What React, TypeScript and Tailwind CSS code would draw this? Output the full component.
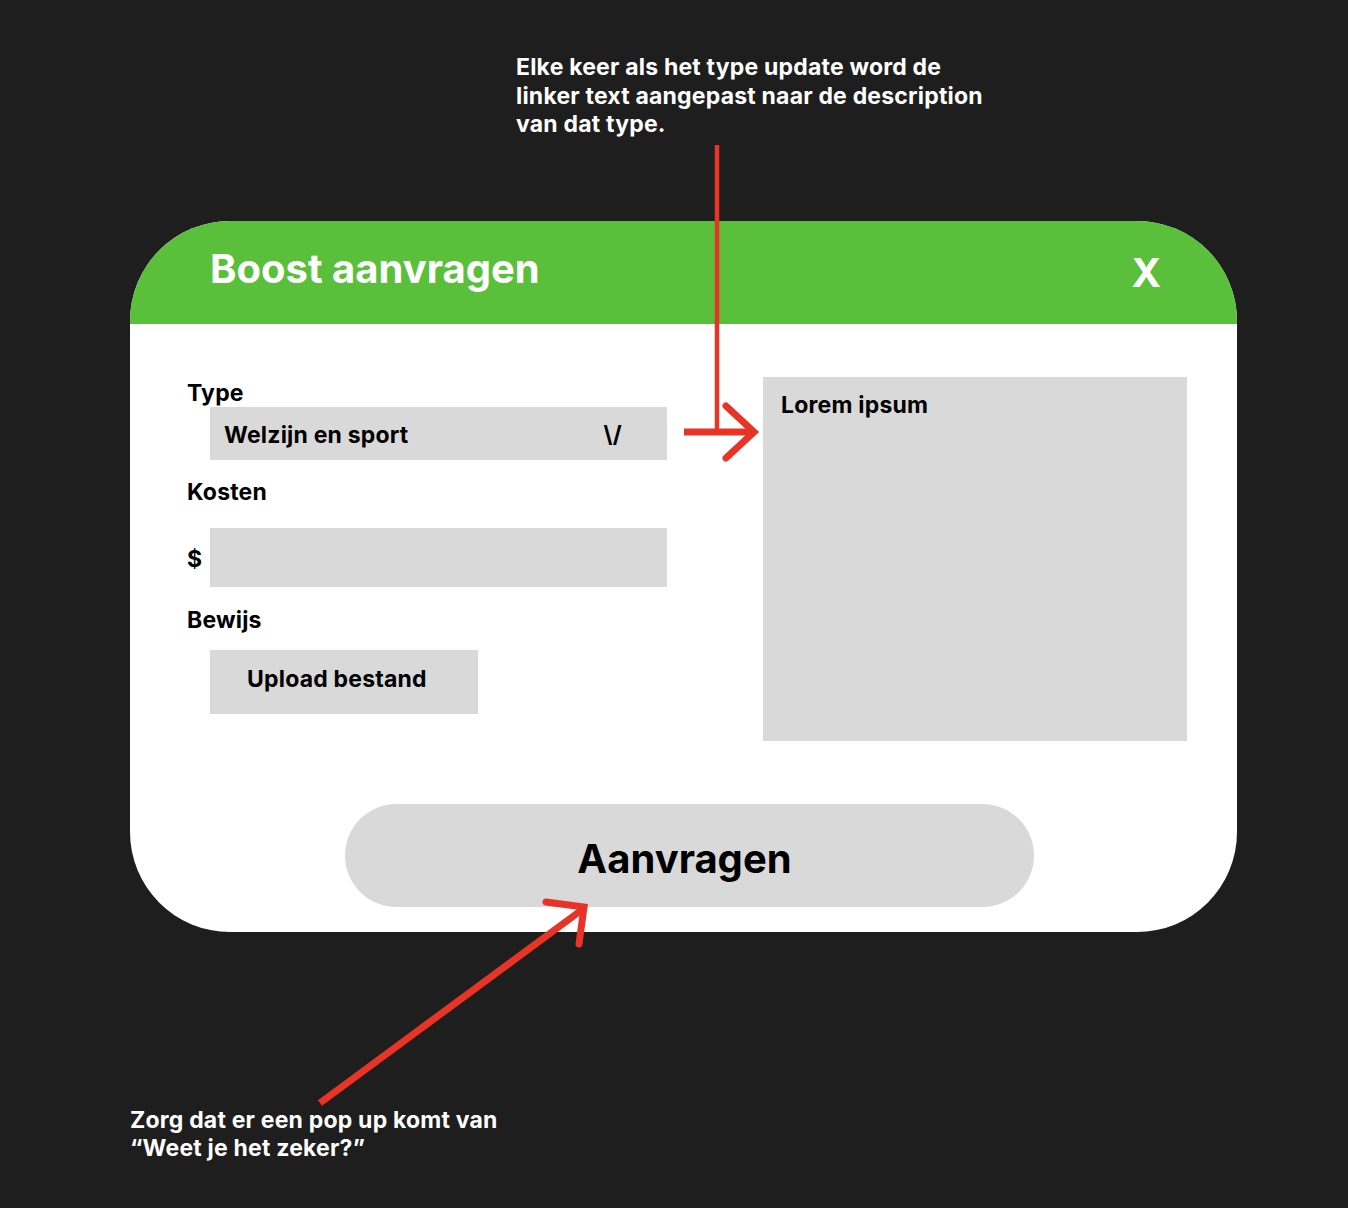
export default function App() {
  return (
    <div
      className="relative w-[1348px] h-[1208px] bg-[#1e1e1e] overflow-hidden"
      style={{ fontFamily: "Inter, 'Noto Sans', sans-serif" }}
    >
      {/* note: type description */}
      <div className="pt-[53px] pl-[516px] text-[23px] leading-[28.5px] font-bold tracking-[0.2px] text-white">
        Elke keer als het type update word de
        <br />
        linker text aangepast naar de description
        <br />
        van dat type.
      </div>

      {/* modal */}
      <div className="mt-[82px] ml-[130px] w-[1107px] rounded-[100px] bg-white overflow-hidden">
        <div className="h-[103px] bg-[#5abf3b] flex items-start justify-between pl-[80px] pr-[76px] text-white font-bold text-[40px] leading-[48px]">
          <div className="pt-[24px]">Boost aanvragen</div>
          <div className="pt-[28px]">X</div>
        </div>

        <div className="flex items-start pt-[53px] pl-[57px] gap-[96px]">
          <div className="w-[480px] pt-[2px] text-[23px] leading-[28px] font-bold tracking-[0.2px] text-black">
            <div>Type</div>
            <div className="ml-[23px] h-[53px] bg-[#d9d9d9] flex items-center justify-between pt-[3px] pl-[14px] pr-[45px]">
              <span>Welzijn en sport</span>
              <span>\/</span>
            </div>
            <div className="mt-[18px]">Kosten</div>
            <div className="mt-[22px] flex items-center">
              <span className="w-[23px] pt-[3px]">$</span>
              <div className="flex-1 h-[59px] bg-[#d9d9d9]" />
            </div>
            <div className="mt-[19px]">Bewijs</div>
            <div className="mt-[16px] ml-[23px] w-[268px] h-[64px] bg-[#d9d9d9] flex items-center pl-[37px] pb-[5px]">
              Upload bestand
            </div>
          </div>
          <div className="w-[424px] h-[364px] bg-[#d9d9d9] pt-[14px] pl-[18px] text-[23px] leading-[28px] font-bold tracking-[0.2px] text-black">
            Lorem ipsum
          </div>
        </div>

        <div className="mt-[63px] mb-[25px] ml-[215px] w-[689px] h-[103px] rounded-full bg-[#d9d9d9] flex items-center justify-center pt-[8px] pr-[10px] text-[40px] leading-[48px] font-bold text-black">
          Aanvragen
        </div>
      </div>

      {/* note: confirmation */}
      <div className="mt-[174px] pl-[130px] text-[23px] leading-[28.5px] font-bold tracking-[0.2px] text-white">
        Zorg dat er een pop up komt van
        <br />
        “Weet je het zeker?”
      </div>

      {/* annotation arrows */}
      <svg
        className="absolute inset-0 pointer-events-none"
        width="1348"
        height="1208"
        viewBox="0 0 1348 1208"
        fill="none"
        stroke="#e73427"
      >
        <line x1="717" y1="145" x2="717" y2="432" strokeWidth="4.5" />
        <line x1="684" y1="432" x2="754" y2="432" strokeWidth="7" />
        <polyline
          points="726,406 754,432 726,458"
          strokeWidth="7"
          strokeLinecap="round"
          strokeLinejoin="miter"
        />
        <line x1="320" y1="1103" x2="583" y2="909" strokeWidth="7" />
        <polyline
          points="546,902 584,907 579,944"
          strokeWidth="7"
          strokeLinecap="round"
          strokeLinejoin="miter"
        />
      </svg>
    </div>
  );
}
